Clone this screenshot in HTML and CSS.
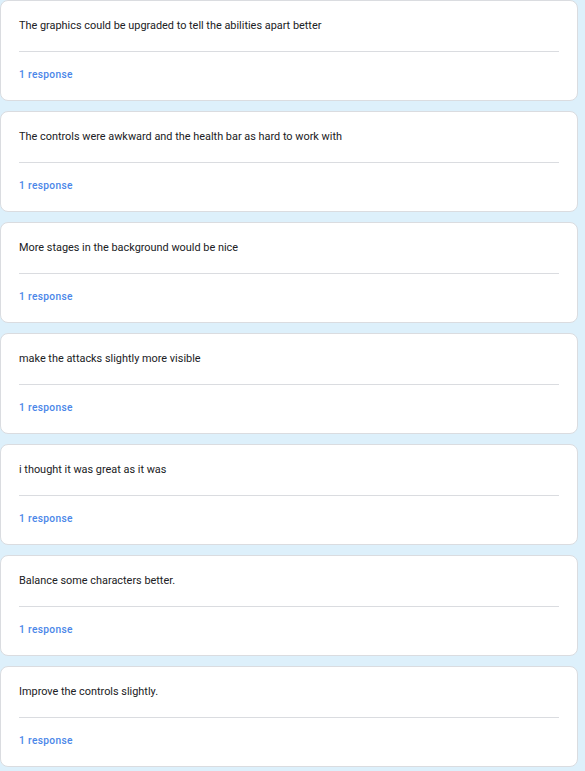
FILE: index.html
```html
<!DOCTYPE html>
<html>
<head>
<meta charset="utf-8">
<link rel="stylesheet" href="styles.css">
</head>
<body>
<div class="list">
  <div class="card"><div class="text">The graphics could be upgraded to tell the abilities apart better</div><div class="divider"></div><div class="count">1 response</div></div>
  <div class="card"><div class="text">The controls were awkward and the health bar as hard to work with</div><div class="divider"></div><div class="count">1 response</div></div>
  <div class="card"><div class="text">More stages in the background would be nice</div><div class="divider"></div><div class="count">1 response</div></div>
  <div class="card"><div class="text">make the attacks slightly more visible</div><div class="divider"></div><div class="count">1 response</div></div>
  <div class="card"><div class="text">i thought it was great as it was</div><div class="divider"></div><div class="count">1 response</div></div>
  <div class="card"><div class="text">Balance some characters better.</div><div class="divider"></div><div class="count">1 response</div></div>
  <div class="card"><div class="text">Improve the controls slightly.</div><div class="divider"></div><div class="count">1 response</div></div>
</div>
</body>
</html>
```
FILE: styles.css
```css
html, body {
  margin: 0;
  padding: 0;
  background: #ddf0fb;
}
body {
  font-family: Roboto, "Liberation Sans", Arial, sans-serif;
}
.list {
  display: flex;
  flex-direction: column;
  gap: 10px;
  width: 578px;
}
.card {
  background: #ffffff;
  border: 1px solid #dadce0;
  border-radius: 8px;
  padding: 17px 18px 18px 18px;
  height: 101px;
  box-sizing: border-box;
}
.text {
  font-size: 10.9px;
  line-height: 16px;
  color: #202124;
}
.divider {
  height: 1px;
  background: #dadce0;
  margin: 17px 0 16px 0;
}
.count {
  font-size: 10.2px;
  line-height: 14px;
  font-weight: 500;
  color: #4a86e8;
  letter-spacing: 0.35px;
}
```
